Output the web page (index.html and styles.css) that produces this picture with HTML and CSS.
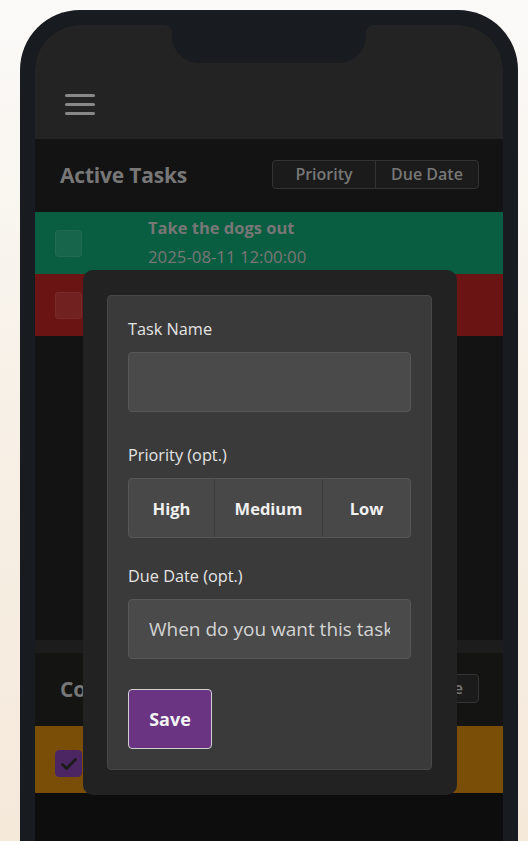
FILE: index.html
```html
<!DOCTYPE html>
<html lang="en">
<head>
<meta charset="utf-8">
<title>Tasks</title>
<link rel="stylesheet" href="styles.css">
</head>
<body>
<div class="phone">
  <div class="screen">
    <div class="notch"></div>
    <header class="topbar">
      <button class="menu" aria-label="Menu"><span></span><span></span><span></span></button>
    </header>
    <section class="tasks active">
      <div class="section-head">
        <h2>Active Tasks</h2>
        <div class="sort-group"><button>Priority</button><button>Due Date</button></div>
      </div>
      <div class="task green">
        <span class="check"></span>
        <div class="task-text">
          <div class="task-name">Take the dogs out</div>
          <div class="task-date">2025-08-11 12:00:00</div>
        </div>
      </div>
      <div class="task red">
        <span class="check"></span>
        <div class="task-text">
          <div class="task-name">Pay the bills</div>
          <div class="task-date">2025-08-10 09:00:00</div>
        </div>
      </div>
      <div class="empty"></div>
    </section>
    <div class="divider"></div>
    <section class="tasks completed">
      <div class="section-head">
        <h2>Completed</h2>
        <div class="sort-group"><button>Priority</button><button>Due Date</button></div>
      </div>
      <div class="task orange">
        <span class="check checked"><svg viewBox="0 0 20 20" width="20" height="20"><path d="M3.5 10.5l4 4L16.5 5.5" fill="none" stroke="#1b1b1b" stroke-width="2.8" stroke-linecap="round" stroke-linejoin="round"/></svg></span>
        <div class="task-text">
          <div class="task-name">Buy groceries</div>
        </div>
      </div>
      <div class="rest"></div>
    </section>

    <div class="modal">
      <form class="card">
        <label class="label">Task Name</label>
        <div class="input"></div>
        <label class="label gap">Priority (opt.)</label>
        <div class="prio-group"><button type="button">High</button><button type="button">Medium</button><button type="button">Low</button></div>
        <label class="label gap2">Due Date (opt.)</label>
        <div class="input"><span class="placeholder">When do you want this task done?</span></div>
        <button type="button" class="save">Save</button>
      </form>
    </div>
  </div>
</div>
</body>
</html>
```

FILE: styles.css
```css
* { box-sizing: border-box; }
html, body { margin: 0; height: 841px; overflow: hidden; }
body {
  background: linear-gradient(180deg, #fbfaf8 0%, #f7f0e6 50%, #f5e9da 100%);
  font-family: "Open Sans", "Noto Sans", sans-serif;
}
.phone {
  margin: 10px 0 0 20px;
  width: 498px;
  height: 900px;
  background: #181b1f;
  border-radius: 60px 60px 0 0;
  padding: 15px 15px 0;
}
.screen {
  position: relative;
  height: 885px;
  border-radius: 45px 45px 0 0;
  overflow: hidden;
  display: flex;
  flex-direction: column;
  background: #0d0d0d;
}
.screen > * { flex: none; }
.notch {
  position: absolute;
  left: 137px;
  top: 0;
  width: 194px;
  height: 38px;
  background: #181b1f;
  border-radius: 0 0 27px 27px;
  z-index: 2;
}
.notch::before, .notch::after {
  content: "";
  position: absolute;
  top: 0;
  width: 9px;
  height: 9px;
}
.notch::before {
  left: -9px;
  background: radial-gradient(circle at 0 100%, transparent 9px, #181b1f 9.5px);
}
.notch::after {
  right: -9px;
  background: radial-gradient(circle at 100% 100%, transparent 9px, #181b1f 9.5px);
}
.topbar {
  height: 114px;
  background: #232323;
  padding: 69px 0 0 30px;
}
.menu {
  display: flex;
  flex-direction: column;
  gap: 6px;
  padding: 0;
  border: 0;
  background: none;
  width: 30px;
}
.menu span {
  display: block;
  height: 3px;
  width: 30px;
  background: #888;
  border-radius: 2px;
}
.tasks.active { background: #131313; }
.section-head {
  height: 73px;
  display: flex;
  align-items: flex-start;
  justify-content: space-between;
  padding: 21px 24px 0 25px;
}
.section-head h2 {
  margin: 0;
  font-size: 21px;
  line-height: 30px;
  font-weight: 700;
  color: #777;
  letter-spacing: -0.2px;
}
.sort-group {
  display: flex;
  border: 1px solid #333;
  border-radius: 4px;
  background: #1b1b1b;
  overflow: hidden;
  height: 29px;
}
.sort-group button {
  font-family: inherit;
  font-size: 16px;
  font-weight: 600;
  color: #777;
  background: none;
  border: 0;
  line-height: 27px;
  padding: 0;
}
.sort-group button:first-child {
  border-right: 1px solid #333;
  width: 103px;
}
.sort-group button:last-child { width: 102px; }
.task {
  height: 62px;
  display: flex;
  align-items: flex-start;
  padding: 18px 0 0 20px;
}
.task.green { background: #095d40; }
.task.red { background: #6a1414; }
.task.orange { background: #7a4e06; height: 67px; padding-top: 24px; }
.check {
  width: 27px;
  height: 27px;
  border-radius: 4px;
  background: rgba(255,255,255,0.06);
  border: 1px solid rgba(255,255,255,0.04);
  flex: none;
  display: flex;
  align-items: center;
  justify-content: center;
}
.check.checked { background: #4c2662; border-color: #4c2662; }
.task-text {
  margin: -14px 0 0 66px;
  color: #777;
}
.task-name {
  font-size: 16.5px;
  font-weight: 700;
  line-height: 24px;
}
.task-date {
  font-size: 16.8px;
  line-height: 34px;
}
.empty { height: 304px; }
.divider { height: 13px; background: #1c1c1c; }
.tasks.completed { background: #141412; }
.rest { height: 200px; background: #0d0d0d; }

.modal {
  position: absolute;
  left: 48px;
  top: 245px;
  width: 374px;
  height: 525px;
  background: #222;
  border-radius: 10px;
  padding: 25px 25px 25px 24px;
  z-index: 3;
}
.card {
  height: 475px;
  width: 325px;
  background: #3a3a3a;
  border: 1px solid #474747;
  border-radius: 4px;
  padding: 21px 20px 20px 20px;
  display: flex;
  flex-direction: column;
  align-items: flex-start;
}
.label {
  font-size: 16.3px;
  line-height: 24px;
  color: #e4e4e4;
  margin-bottom: 11px;
}
.label.gap { margin-top: 31px; }
.label.gap2 { margin-top: 26px; }
.input {
  width: 283px;
  height: 60px;
  background: #4a4a4a;
  border: 1px solid #575757;
  border-radius: 4px;
  padding: 0 20px;
  display: flex;
}
.placeholder {
  display: block;
  flex: 1;
  min-width: 0;
  font-size: 19px;
  line-height: 58px;
  color: #d4d4d4;
  white-space: nowrap;
  overflow: hidden;
}
.prio-group {
  display: flex;
  width: 283px;
  height: 60px;
  border: 1px solid #575757;
  border-radius: 4px;
  background: #484848;
  overflow: hidden;
}
.prio-group button {
  font-family: inherit;
  font-size: 16.5px;
  font-weight: 700;
  color: #f0f0f0;
  background: none;
  border: 0;
  padding: 0;
}
.prio-group button:nth-child(1) { width: 86px; border-right: 1px solid #3c3c3c; }
.prio-group button:nth-child(2) { width: 108px; border-right: 1px solid #3c3c3c; }
.prio-group button:nth-child(3) { flex: 1; }
.save {
  margin-top: 30px;
  width: 84px;
  height: 60px;
  background: #6a3483;
  border: 1px solid #d0d0d0;
  border-radius: 4px;
  color: #f4f4f4;
  font-family: inherit;
  font-size: 18px;
  font-weight: 700;
  padding: 0;
}
```
